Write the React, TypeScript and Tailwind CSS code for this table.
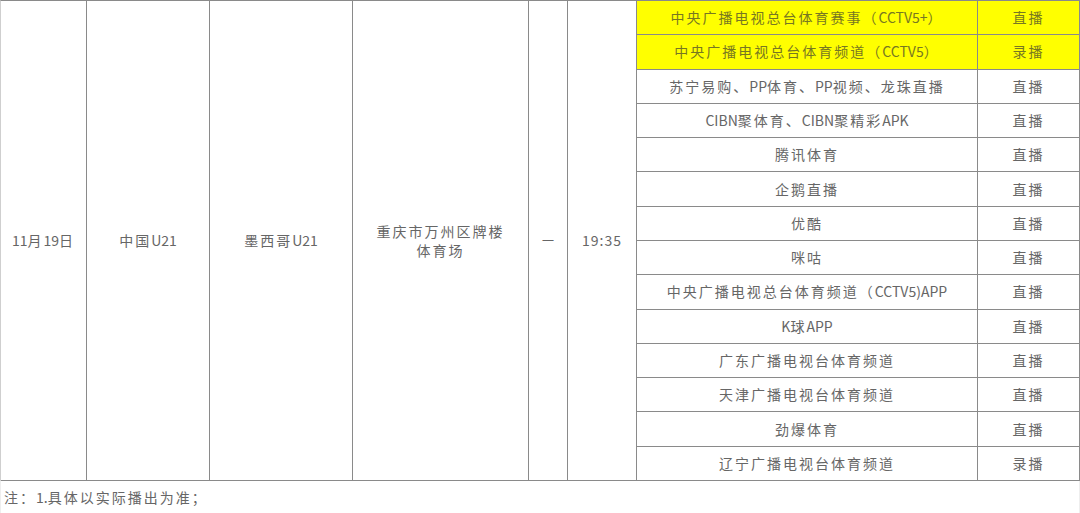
import React from "react";

const rows: { name: string; type: string; hl?: boolean }[] = [
  { name: "中央广播电视总台体育赛事（CCTV5+）", type: "直播", hl: true },
  { name: "中央广播电视总台体育频道（CCTV5）", type: "录播", hl: true },
  { name: "苏宁易购、PP体育、PP视频、龙珠直播", type: "直播" },
  { name: "CIBN聚体育、CIBN聚精彩APK", type: "直播" },
  { name: "腾讯体育", type: "直播" },
  { name: "企鹅直播", type: "直播" },
  { name: "优酷", type: "直播" },
  { name: "咪咕", type: "直播" },
  { name: "中央广播电视总台体育频道（CCTV5)APP", type: "直播" },
  { name: "K球APP", type: "直播" },
  { name: "广东广播电视台体育频道", type: "直播" },
  { name: "天津广播电视台体育频道", type: "直播" },
  { name: "劲爆体育", type: "直播" },
  { name: "辽宁广播电视台体育频道", type: "录播" },
];

function T({ s }: { s: string }) {
  const parts = s.match(/[\x00-\x7f]+|[^\x00-\x7f]+/g) || [];
  return (
    <>
      {parts.map((p, i) =>
        /^[\x00-\x7f]+$/.test(p) ? (
          <span key={i} className="tracking-normal">{p}</span>
        ) : (
          <span key={i} className="tracking-[2px]">{p}</span>
        )
      )}
    </>
  );
}

const cell = "flex items-center justify-center border-r border-b border-[#8a8a8a]";

export default function App() {
  return (
    <div
      className="w-[1080px] h-[513px] bg-white text-[#666666] text-[14px] overflow-hidden"
      style={{ fontFamily: '"Noto Sans CJK SC", "Noto Sans", sans-serif' }}
    >
      <div className="flex h-[481px] border-t border-[#8a8a8a] border-l border-l-[#cfcfcf]">
        <div className={`w-[86px] ${cell}`}><T s="11月19日" /></div>
        <div className={`w-[123px] ${cell}`}><T s="中国U21" /></div>
        <div className={`w-[143px] ${cell}`}><T s="墨西哥U21" /></div>
        <div className={`w-[176px] flex-col leading-[19px] text-center ${cell}`}>
          <span><T s="重庆市万州区牌楼" /></span>
          <span><T s="体育场" /></span>
        </div>
        <div className={`w-[39px] text-[12px] ${cell}`}>一</div>
        <div className={`w-[69px] tracking-[1px] ${cell}`}>19:35</div>
        <div className="flex-1 grid grid-rows-[repeat(14,minmax(0,1fr))]">
          {rows.map((r, i) => (
            <div key={i} className={`flex border-b border-[#8a8a8a] ${r.hl ? "bg-[#ffff00] text-[#777722]" : ""}`}>
              <div className="w-[341px] flex items-center justify-center border-r border-[#8a8a8a] whitespace-nowrap">
                <T s={r.name} />
              </div>
              <div className="flex-1 flex items-center justify-center border-r border-[#8a8a8a]">
                <T s={r.type} />
              </div>
            </div>
          ))}
        </div>
      </div>
      <div className="h-[32px] flex items-center pl-[3px] border-l border-r border-[#eeeeee]">
        <T s="注：1.具体以实际播出为准；" />
      </div>
    </div>
  );
}
